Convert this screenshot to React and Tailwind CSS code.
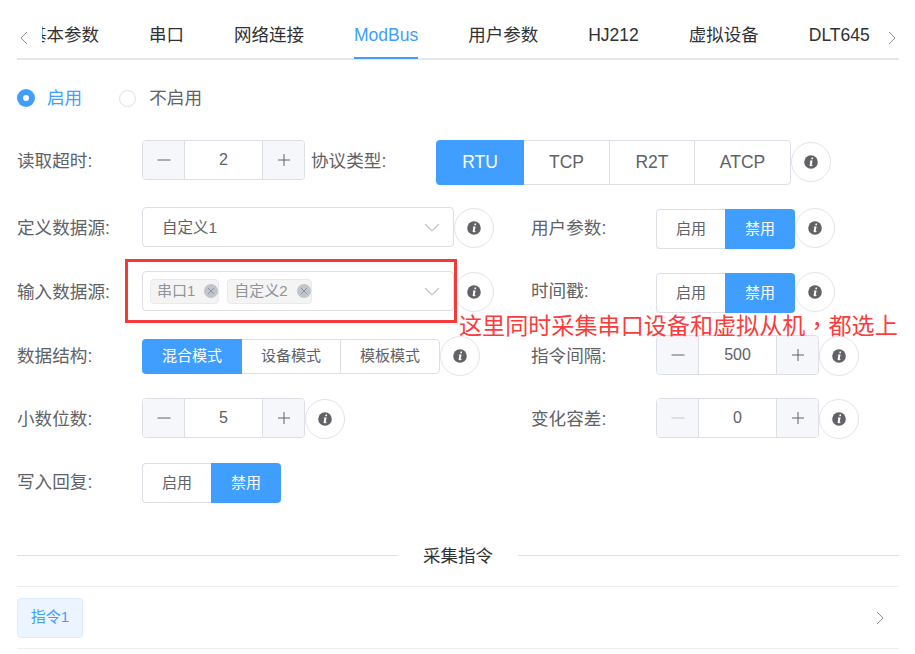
const font = { fontFamily: '"Liberation Sans","Noto Sans CJK SC",sans-serif' };

function Info({ className = "" }) {
  return (
    <div className={"w-10 h-10 shrink-0 rounded-full border border-[#e2e4ec] bg-white flex items-center justify-center " + className}>
      <svg width="14" height="14" viewBox="0 0 14 14">
        <circle cx="7" cy="7" r="6.8" fill="#606266" />
        <path d="M7.6 2.6h1.6l-.35 1.6H7.25zM6 5.5h2.6L7.7 9.9c-.05.3.25.35.9-.15l.15.4c-.8.9-1.4 1.15-2.1 1.15-.8 0-1.1-.45-.95-1.2l.6-3.4c.05-.3-.1-.4-.5-.35z" fill="#fff" />
      </svg>
    </div>
  );
}

function Label({ children, className = "w-[125px]" }) {
  return <div className={"shrink-0 text-[17.6px] leading-[24px] text-[#606266] " + className}>{children}</div>;
}

function Stepper({ value, minusMuted, className = "" }) {
  return (
    <div className={"flex w-[163px] h-10 shrink-0 rounded border border-[#dcdfe6] overflow-hidden " + className}>
      <div className="w-[42px] bg-[#f5f7fa] border-r border-[#dcdfe6] flex items-center justify-center">
        <svg width="14" height="14" viewBox="0 0 14 14"><path d="M0.5 7h13" stroke={minusMuted ? "#c0c4cc" : "#606266"} /></svg>
      </div>
      <div className="flex-1 flex items-center justify-center text-[16px] text-[#606266]">{value}</div>
      <div className="w-[42px] bg-[#f5f7fa] border-l border-[#dcdfe6] flex items-center justify-center">
        <svg width="14" height="14" viewBox="0 0 14 14"><path d="M1 7h12M7 1v12" stroke="#606266" /></svg>
      </div>
    </div>
  );
}

function Toggle({ className = "" }) {
  return (
    <div className={"flex w-[139px] h-10 shrink-0 text-[15px] " + className}>
      <div className="w-[69px] border border-[#dcdfe6] border-r-0 rounded-l flex items-center justify-center text-[#606266]">启用</div>
      <div className="w-[70px] bg-[#409eff] rounded-r flex items-center justify-center text-white">禁用</div>
    </div>
  );
}

function Chevron() {
  return (
    <svg width="16" height="9" viewBox="0 0 16 9" className="absolute right-[13px] top-[15px]">
      <path d="M1 1l7 7 7-7" fill="none" stroke="#c0c4cc" strokeWidth="1.1" />
    </svg>
  );
}

function Tag({ text, className = "" }) {
  return (
    <div className={"flex items-center h-[25px] rounded bg-[#f4f4f5] border border-[#e9e9eb] pl-[6px] text-[15px] text-[#909399] " + className}>
      <span>{text}</span>
      <span className="ml-[9px] w-[14px] h-[14px] rounded-full bg-[#c0c4cc] flex items-center justify-center">
        <svg width="8" height="8" viewBox="0 0 8 8"><path d="M1 1l6 6M7 1L1 7" stroke="#909399" strokeWidth="1" /></svg>
      </span>
    </div>
  );
}

function Side({ d }) {
  return (
    <svg width="9" height="14" viewBox="0 0 9 14" className="shrink-0">
      <path d={d} fill="none" stroke="#909399" strokeWidth="1" />
    </svg>
  );
}

export default function App() {
  const tabs = ["基本参数", "串口", "网络连接", "ModBus", "用户参数", "HJ212", "虚拟设备", "DLT645"];
  return (
    <div style={font} className="relative w-[915px] h-[654px] overflow-hidden bg-white pl-[17px] pr-4">
      {/* tabs */}
      <div className="relative flex items-center h-[60px] border-b-2 border-[#e4e7ed]">
        <div className="w-[25px] pl-[2px] pt-[18px] shrink-0"><Side d="M8 1L2 7l6 6" /></div>
        <div className="w-[830px] h-[60px] overflow-hidden shrink-0">
          <div className="flex gap-[50px] ml-[-13px] text-[17.5px] leading-[74px] h-[60px] whitespace-nowrap text-[#303133]">
            {tabs.map((t) => (
              <div key={t} className={"relative -mt-[1px] h-[60px] " + (t === "ModBus" ? "text-[#409eff]" : "")}>
                {t}
                {t === "ModBus" && <div className="absolute left-0 right-0 top-[59px] h-[2px] bg-[#409eff]" />}
              </div>
            ))}
          </div>
        </div>
        <div className="pl-[16px] pt-[18px]"><Side d="M1 1l6 6-6 6" /></div>
      </div>

      {/* radio */}
      <div className="flex items-center h-[18px] mt-[29px] text-[17.6px]">
        <span className="w-[18px] h-[18px] rounded-full bg-[#409eff] flex items-center justify-center">
          <span className="w-[6px] h-[6px] rounded-full bg-white" />
        </span>
        <span className="ml-3 mt-px text-[#409eff]">启用</span>
        <span className="ml-[37px] w-[17px] h-[17px] rounded-full border border-[#dcdfe6]" />
        <span className="ml-[13px] mt-px text-[#606266]">不启用</span>
      </div>

      {/* row 1 */}
      <div className="flex mt-[33px] h-[45px]">
        <Label className="w-[125px] mt-[9px]">读取超时:</Label>
        <Stepper value="2" />
        <Label className="w-[125px] ml-[6px] mt-[9px]">协议类型:</Label>
        <div className="flex h-[45px] w-[355px] text-[17.5px] text-[#606266] shrink-0">
          <div className="w-[88px] bg-[#409eff] text-white rounded-l flex items-center justify-center">RTU</div>
          <div className="w-[85px] border-y border-[#dcdfe6] flex items-center justify-center">TCP</div>
          <div className="w-[85px] border-y border-l border-[#dcdfe6] flex items-center justify-center">R2T</div>
          <div className="w-[97px] border border-[#dcdfe6] rounded-r flex items-center justify-center">ATCP</div>
        </div>
        <Info className="mt-[2px]" />
      </div>

      {/* row 2 */}
      <div className="flex mt-[22px] h-[42px]">
        <Label className="w-[125px] mt-[9px]">定义数据源:</Label>
        <div className="relative w-[312px] h-10 shrink-0 border border-[#dcdfe6] rounded flex items-center pl-[19px] pt-px text-[15.5px] text-[#606266]">
          自定义1
          <Chevron />
        </div>
        <Info className="mt-px" />
        <Label className="w-[125px] ml-[37px] mt-[9px]">用户参数:</Label>
        <Toggle className="mt-[2px]" />
        <Info className="mt-px" />
      </div>

      {/* row 3 */}
      <div className="flex mt-[22px] h-[42px]">
        <Label className="w-[125px] mt-[9px]">输入数据源:</Label>
        <div className="relative w-[312px] h-10 shrink-0 border border-[#dcdfe6] rounded flex items-center pl-[7px] gap-2">
          <Tag text="串口1" />
          <Tag text="自定义2" />
          <Chevron />
        </div>
        <Info className="mt-px" />
        <Label className="w-[125px] ml-[37px] mt-[8px]">时间戳:</Label>
        <Toggle className="mt-[2px]" />
        <Info className="mt-px" />
      </div>

      {/* row 4 */}
      <div className="flex mt-[22px] h-[41px]">
        <Label className="w-[125px] mt-[9px]">数据结构:</Label>
        <div className="flex w-[298px] h-[35px] mt-1 shrink-0 text-[15px] text-[#606266]">
          <div className="w-[100px] bg-[#409eff] text-white rounded-l flex items-center justify-center">混合模式</div>
          <div className="w-[98px] border-y border-[#dcdfe6] flex items-center justify-center">设备模式</div>
          <div className="w-[100px] border border-[#dcdfe6] rounded-r flex items-center justify-center">模板模式</div>
        </div>
        <Info className="mt-px" />
        <Label className="w-[125px] ml-[51px] mt-[9px]">指令间隔:</Label>
        <Stepper value="500" />
        <Info className="mt-px" />
      </div>

      {/* row 5 */}
      <div className="flex mt-[22px] h-[41px]">
        <Label className="w-[125px] mt-[9px]">小数位数:</Label>
        <Stepper value="5" />
        <Info className="mt-px" />
        <Label className="w-[125px] ml-[186px] mt-[9px]">变化容差:</Label>
        <Stepper value="0" minusMuted />
        <Info className="mt-px" />
      </div>

      {/* row 6 */}
      <div className="flex mt-6 h-10">
        <Label className="w-[125px] mt-[7px]">写入回复:</Label>
        <Toggle />
      </div>

      {/* divider */}
      <div className="flex items-center mt-10 h-[24px] w-[882px]">
        <div className="w-[381px] h-px bg-[#dcdfe6]" />
        <div className="w-[120px] pt-[3px] text-center text-[17.5px] text-[#303133]">采集指令</div>
        <div className="flex-1 h-px bg-[#dcdfe6]" />
      </div>

      {/* collapse */}
      <div className="flex items-center justify-between mt-[19px] w-[882px] h-[63px] border-y border-[#ebeef5]">
        <div className="w-[66px] h-10 rounded bg-[#ecf5ff] border border-[#d9ecff] text-[#409eff] text-[15px] flex items-center justify-center">指令1</div>
        <div className="mr-[14px]"><Side d="M1 1l6 6-6 6" /></div>
      </div>

      {/* annotation */}
      <div className="absolute left-[125px] top-[259px] w-[332px] h-[64px] border-[3px] border-[#f53838] pointer-events-none" />
      <div className="absolute left-[459px] top-[307px] text-[23.1px] leading-[34px] whitespace-nowrap text-[#fb3c3c]">
        这里同时采集串口设备和虚拟从机<span className="font-['Noto_Sans_CJK_TC']">，</span>都选上
      </div>
    </div>
  );
}
